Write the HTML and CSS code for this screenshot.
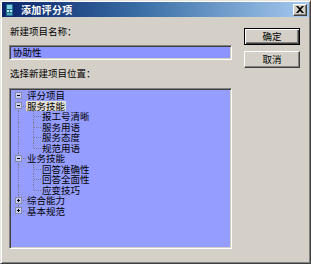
FILE: index.html
```html
<!DOCTYPE html>
<html lang="zh-CN">
<head>
    <meta charset="UTF-8">
    <title>添加评分项</title>
    <link rel="stylesheet" href="styles.css">
</head>
<body>
    <div class="dialog">
        <div class="titlebar">
            <svg class="app-icon" width="9" height="12" viewBox="0 0 9 12">
                <rect x="1" y="0" width="7" height="12" rx="1" fill="#1f6f8f"/>
                <rect x="2" y="1" width="5" height="4" fill="#7fd0e0"/>
                <rect x="2" y="6" width="2" height="2" fill="#c8f0f0"/>
                <rect x="5" y="6" width="2" height="2" fill="#c8f0f0"/>
                <rect x="2" y="9" width="5" height="2" fill="#4fa8c0"/>
            </svg>
            <span class="title">添加评分项</span>
            <span class="close-btn">
                <svg width="8" height="7" viewBox="0 0 8 7">
                    <path d="M0 0h2l2 2 2-2h2L5 3.5 8 7H6L4 5 2 7H0l3-3.5z" fill="#000"/>
                </svg>
            </span>
        </div>

        <div class="body">
            <div class="form">
                <div class="label">新建项目名称：</div>
                <div class="input">协助性</div>
                <div class="label second">选择新建项目位置：</div>
                <div class="tree">
                    <div class="row">
                        <span class="cell"><span class="box minus"></span></span>
                        <span class="text">评分项目</span>
                    </div>
                    <div class="row">
                        <span class="cell t"><span class="box minus"></span></span>
                        <span class="text selected">服务技能</span>
                    </div>
                    <div class="row">
                        <span class="cell v"></span>
                        <span class="cell t"></span>
                        <span class="text">报工号清晰</span>
                    </div>
                    <div class="row">
                        <span class="cell v"></span>
                        <span class="cell t"></span>
                        <span class="text">服务用语</span>
                    </div>
                    <div class="row">
                        <span class="cell v"></span>
                        <span class="cell t"></span>
                        <span class="text">服务态度</span>
                    </div>
                    <div class="row">
                        <span class="cell v"></span>
                        <span class="cell l"></span>
                        <span class="text">规范用语</span>
                    </div>
                    <div class="row">
                        <span class="cell t"><span class="box minus"></span></span>
                        <span class="text">业务技能</span>
                    </div>
                    <div class="row">
                        <span class="cell v"></span>
                        <span class="cell t"></span>
                        <span class="text">回答准确性</span>
                    </div>
                    <div class="row">
                        <span class="cell v"></span>
                        <span class="cell t"></span>
                        <span class="text">回答全面性</span>
                    </div>
                    <div class="row">
                        <span class="cell v"></span>
                        <span class="cell l"></span>
                        <span class="text">应变技巧</span>
                    </div>
                    <div class="row">
                        <span class="cell t"><span class="box plus"></span></span>
                        <span class="text">综合能力</span>
                    </div>
                    <div class="row">
                        <span class="cell l"><span class="box plus"></span></span>
                        <span class="text">基本规范</span>
                    </div>
                </div>
            </div>

            <div class="actions">
                <button class="btn default">确定</button>
                <button class="btn">取消</button>
            </div>
        </div>
    </div>
</body>
</html>
```

FILE: styles.css
```css
* {
    margin: 0;
    padding: 0;
    box-sizing: border-box;
    font-family: "Noto Sans CJK SC", "DejaVu Sans", sans-serif;
}

body {
    background: #d4d0c8;
    width: 311px;
    height: 264px;
    overflow: hidden;
}

.dialog {
    width: 311px;
    height: 264px;
    background: #d4d0c8;
    border: 1px solid;
    border-color: #e8e6e0 #404040 #404040 #e8e6e0;
    box-shadow: inset 1px 1px #ffffff, inset -1px -1px #808080;
    padding: 1px;
    display: flex;
    flex-direction: column;
}

/* title bar */
.titlebar {
    height: 15px;
    background: linear-gradient(90deg, #0a246a 0%, #3a6ea5 45%, #a6caf0 100%);
    display: flex;
    align-items: center;
    padding: 0 2px 0 2px;
}

.app-icon {
    display: block;
    margin-left: 1px;
}

.title {
    color: #fff;
    font-weight: bold;
    font-size: 10px;
    line-height: 15px;
    margin-left: 7px;
    letter-spacing: 0.3px;
}

.close-btn {
    margin-left: auto;
    width: 14px;
    height: 12px;
    background: #d4d0c8;
    border: 1px solid;
    border-color: #fff #404040 #404040 #fff;
    box-shadow: inset -1px -1px #808080;
    display: flex;
    align-items: center;
    justify-content: center;
}

.close-btn svg {
    display: block;
}

/* body */
.body {
    flex: 1;
    display: flex;
    padding: 8px 0 0 7px;
}

.form {
    width: 223px;
    display: flex;
    flex-direction: column;
}

.label {
    font-size: 9.5px;
    line-height: 12px;
    height: 12px;
    color: #000;
    padding-left: 1px;
}

.label.second {
    margin-top: 7px;
}

.input {
    margin-top: 8px;
    height: 15px;
    background: #8c94ff;
    border: 1px solid;
    border-color: #808080 #fff #fff #808080;
    box-shadow: inset 1px 1px #404040, inset -1px -1px #d4d0c8;
    font-size: 9.5px;
    line-height: 13px;
    padding-left: 3px;
    color: #000;
}

.tree {
    margin-top: 9px;
    height: 161px;
    background: #959dff;
    border: 1px solid;
    border-color: #808080 #fff #fff #808080;
    box-shadow: inset 1px 1px #404040, inset -1px -1px #d4d0c8;
    padding: 1px;
}

.row {
    display: flex;
    align-items: center;
    height: 10.5px;
}

.cell {
    position: relative;
    width: 15px;
    height: 10.5px;
    flex-shrink: 0;
    display: flex;
    align-items: center;
    justify-content: center;
}

.cell.v::before,
.cell.t::before,
.cell.l::before {
    content: "";
    position: absolute;
    left: 7px;
    top: 0;
    bottom: 0;
    border-left: 1px dotted #7a7a9a;
}

.cell.l::before {
    bottom: 50%;
}

.cell.t::after,
.cell.l::after {
    content: "";
    position: absolute;
    left: 8px;
    right: 0;
    top: 5px;
    border-top: 1px dotted #7a7a9a;
}

.box {
    position: relative;
    z-index: 1;
    width: 7px;
    height: 7px;
    border: 1px solid #8a8aa0;
    background: #c8ccf8;
    margin-left: 0;
}

.box::before {
    content: "";
    position: absolute;
    left: 1px;
    top: 2px;
    width: 3px;
    height: 1px;
    background: #000;
}

.box.plus::after {
    content: "";
    position: absolute;
    left: 2px;
    top: 1px;
    width: 1px;
    height: 3px;
    background: #000;
}

.text {
    font-size: 9.5px;
    line-height: 10.5px;
    color: #000;
    padding: 0 1px;
    white-space: nowrap;
}

.text.selected {
    background: #e4e0d6;
}

/* buttons */
.actions {
    margin-left: 12px;
    padding-top: 3px;
    display: flex;
    flex-direction: column;
    gap: 6px;
}

.btn {
    width: 56px;
    height: 17px;
    background: #d4d0c8;
    border: 1px solid;
    border-color: #fff #404040 #404040 #fff;
    box-shadow: inset -1px -1px #808080;
    font-size: 9.5px;
    line-height: 15px;
    color: #000;
}

.btn.default {
    border-color: #000;
    box-shadow: inset 1px 1px #fff, inset -1px -1px #404040, inset -2px -2px #808080;
}
```
